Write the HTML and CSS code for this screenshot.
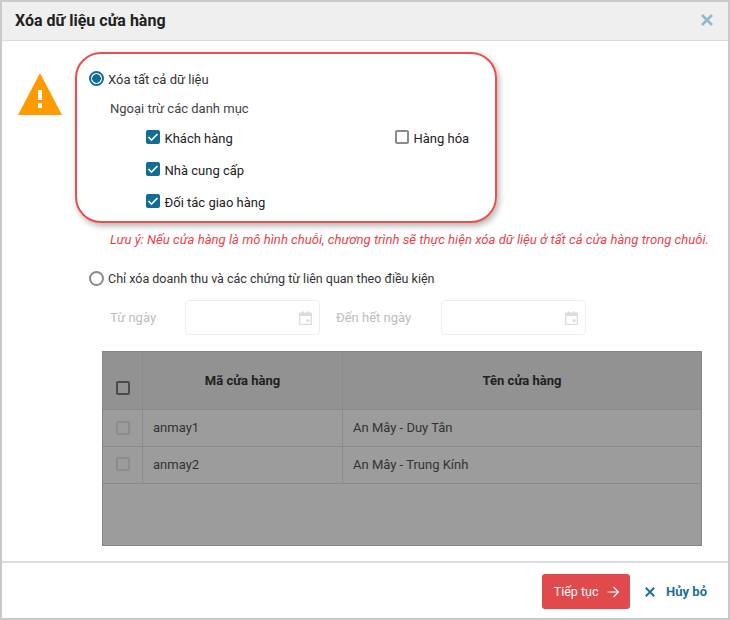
FILE: index.html
```html
<!DOCTYPE html>
<html lang="vi">
<head>
<meta charset="utf-8">
<title>Xóa dữ liệu cửa hàng</title>
<link rel="stylesheet" href="styles.css">
</head>
<body>
<div class="dialog">
  <header class="head">
    <h1 class="title">Xóa dữ liệu cửa hàng</h1>
    <svg class="close" width="14" height="14" viewBox="0 0 14 14"><path d="M2 2l10 10M12 2L2 12" stroke="#8fb8cc" stroke-width="2.6" fill="none"/></svg>
  </header>
  <main class="body">
    <svg class="warn" width="44" height="42" viewBox="0 0 44 42"><path d="M22 0L44 42H0z" fill="#ff9a00"/><path d="M20 17h4v10h-4zM20 30h4v5h-4z" fill="#fff"/></svg>
    <div class="content">
      <div class="highlight"></div>
      <label class="radio-row first"><span class="radio on"></span>Xóa tất cả dữ liệu</label>
      <p class="sub">Ngoại trừ các danh mục</p>
      <div class="checks">
        <label class="check-row"><span class="check on"><svg width="14" height="14" viewBox="0 0 14 14"><path d="M2.500 7l3 3 6-6" stroke="#fff" stroke-width="1.700" fill="none"/></svg></span>Khách hàng</label>
        <label class="check-row"><span class="check"></span>Hàng hóa</label>
        <label class="check-row"><span class="check on"><svg width="14" height="14" viewBox="0 0 14 14"><path d="M2.500 7l3 3 6-6" stroke="#fff" stroke-width="1.700" fill="none"/></svg></span>Nhà cung cấp</label>
        <span></span>
        <label class="check-row"><span class="check on"><svg width="14" height="14" viewBox="0 0 14 14"><path d="M2.500 7l3 3 6-6" stroke="#fff" stroke-width="1.700" fill="none"/></svg></span>Đối tác giao hàng</label>
      </div>
      <p class="note">Lưu ý: Nếu cửa hàng là mô hình chuỗi, chương trình sẽ thực hiện xóa dữ liệu ở tất cả cửa hàng trong chuỗi.</p>
      <label class="radio-row second"><span class="radio"></span>Chỉ xóa doanh thu và các chứng từ liên quan theo điều kiện</label>
      <div class="dates">
        <span class="date-label from">Từ ngày</span>
        <span class="date-input w1"><svg width="13" height="14" viewBox="0 0 13 14"><path fill-rule="evenodd" d="M1 1.500h2V0.500h2V1.500h3V0.500h2V1.500h2a1 1 0 0 1 1 1v10.500a1 1 0 0 1-1 1H1a1 1 0 0 1-1-1V2.500a1 1 0 0 1 1-1zM1.300 5v7.700h10.400V5zM7.500 8.500h3V11h-3z" fill="#dcdcdc"/></svg></span>
        <span class="date-label to">Đến hết ngày</span>
        <span class="date-input w2"><svg width="13" height="14" viewBox="0 0 13 14"><path fill-rule="evenodd" d="M1 1.500h2V0.500h2V1.500h3V0.500h2V1.500h2a1 1 0 0 1 1 1v10.500a1 1 0 0 1-1 1H1a1 1 0 0 1-1-1V2.500a1 1 0 0 1 1-1zM1.300 5v7.700h10.400V5zM7.500 8.500h3V11h-3z" fill="#dcdcdc"/></svg></span>
      </div>
      <div class="table">
        <div class="cell th chk"><span class="box dark"></span></div>
        <div class="cell th">Mã cửa hàng</div>
        <div class="cell th last">Tên cửa hàng</div>
        <div class="cell td chk"><span class="box"></span></div>
        <div class="cell td txt">anmay1</div>
        <div class="cell td txt last">An Mây - Duy Tân</div>
        <div class="cell td chk txt"><span class="box"></span></div>
        <div class="cell td txt">anmay2</div>
        <div class="cell td txt last">An Mây - Trung Kính</div>
      </div>
    </div>
  </main>
  <footer class="foot">
    <button class="btn-next">Tiếp tục<svg width="12" height="12" viewBox="0 0 12 12"><path d="M0.500 6h10.500M6.500 1l5 5-5 5" stroke="#fff" stroke-width="1.200" fill="none"/></svg></button>
    <button class="btn-cancel"><svg width="10" height="10" viewBox="0 0 10 10"><path d="M0.800 0.800l8.400 8.400M9.200 0.800l-8.400 8.400" stroke="#1a7099" stroke-width="2" fill="none"/></svg>Hủy bỏ</button>
  </footer>
</div>
</body>
</html>
```
FILE: styles.css
```css
* { box-sizing: border-box; }
html, body { margin: 0; padding: 0; }
body { font-family: Roboto, "Liberation Sans", sans-serif; font-size: 13px; color: #333; background: #fff; }
.dialog { width: 730px; height: 620px; border: 2px solid #c9c9c9; display: flex; flex-direction: column; background: #fff; }
.head { height: 39px; flex: none; background: #efefef; border-bottom: 1px solid #dcdcdc; display: flex; align-items: center; justify-content: space-between; padding: 0 14px 2px 13px; }
.title { margin: 0; font-size: 16px; font-weight: 700; color: #212121; }
.close { display: block; }
.body { flex: 1; display: flex; min-height: 0; }
.warn { flex: none; margin: 32px 0 0 16px; display: block; }
.content { position: relative; flex: 1; padding-left: 27px; }
.highlight { position: absolute; left: 13px; top: 11px; width: 422px; height: 171px; border: 2px solid #e8504f; border-radius: 26px; box-shadow: 2px 3px 6px rgba(0,0,0,.3); pointer-events: none; }
.radio-row { display: flex; align-items: center; gap: 4px; height: 18px; color: #333; }
.radio-row.first { margin-top: 29px; }
.radio-row.second { margin-top: 20px; font-size: 12.500px; }
.radio { width: 15px; height: 15px; border-radius: 50%; border: 2px solid #8a8a8a; background: #fff; flex: none; margin-top: -2px; }
.radio.on { border-color: #0f6e96; background: radial-gradient(circle, #0f6e96 0 4px, #fff 4.600px); }
.radio-row.second .radio { margin-top: 0; }
.sub { margin: 12px 0 0 21px; height: 18px; line-height: 18px; color: #444; }
.checks { margin: 11px 0 0 57px; display: grid; grid-template-columns: 249px auto; grid-auto-rows: 32px; justify-content: start; }
.check-row { display: flex; align-items: center; gap: 4.500px; color: #222; height: 18px; }
.check { width: 14px; height: 14px; border: 2px solid #8a8a8a; border-radius: 2px; display: block; flex: none; margin-top: -2px; }
.check.on { border: 0; background: #0f6e96; }
.check svg { display: block; }
.note { margin: 6px 0 0 21px; height: 18px; line-height: 18px; font-style: italic; color: #e8434b; font-size: 13.100px; white-space: nowrap; }
.dates { margin-top: 13px; height: 35px; display: flex; align-items: center; color: #bdbdbd; }
.date-label.from { margin-left: 21px; width: 75px; }
.date-label.to { margin-left: 16px; width: 105px; }
.date-input { height: 35px; border: 1px solid #efefef; border-radius: 4px; display: flex; align-items: center; justify-content: flex-end; padding-right: 7px; }
.date-input.w1 { width: 135px; }
.date-input.w2 { width: 145px; }
.table { margin: 16px 0 0 13px; width: 600px; height: 195px; background: #9c9c9c; border: 1px solid #858585; display: grid; grid-template-columns: 40px 200px 1fr; grid-template-rows: 58px 37px 37px; }
.cell { display: flex; align-items: center; padding-left: 10px; color: #333; border-right: 1px solid #8a8a8a; border-bottom: 1px solid #8a8a8a; }
.cell.last { border-right: 0; }
.cell.txt { padding-bottom: 2px; }
.th { background: #929292; justify-content: center; padding: 0; font-weight: 700; color: #212121; }
.td.chk { padding-left: 13px; }
.th.chk { padding: 15px 0 0 0; }
.box { width: 14px; height: 14px; border: 2px solid #8c8c8c; border-radius: 2px; display: block; }
.box.dark { border-color: #4a4a4a; }
.foot { height: 57px; flex: none; border-top: 2px solid #dcdcdc; display: flex; align-items: center; justify-content: flex-end; padding: 2px 21px 0 0; gap: 15px; }
.btn-next { width: 88px; height: 35px; border: 0; border-radius: 3px; background: #e04a4c; color: #fff; font: 400 12.500px Roboto, "Liberation Sans", sans-serif; display: flex; align-items: center; justify-content: center; gap: 8px; padding: 0; }
.btn-cancel { border: 0; background: none; padding: 0; color: #1a7099; font: 700 13px Roboto, "Liberation Sans", sans-serif; display: flex; align-items: center; gap: 11px; }
```
